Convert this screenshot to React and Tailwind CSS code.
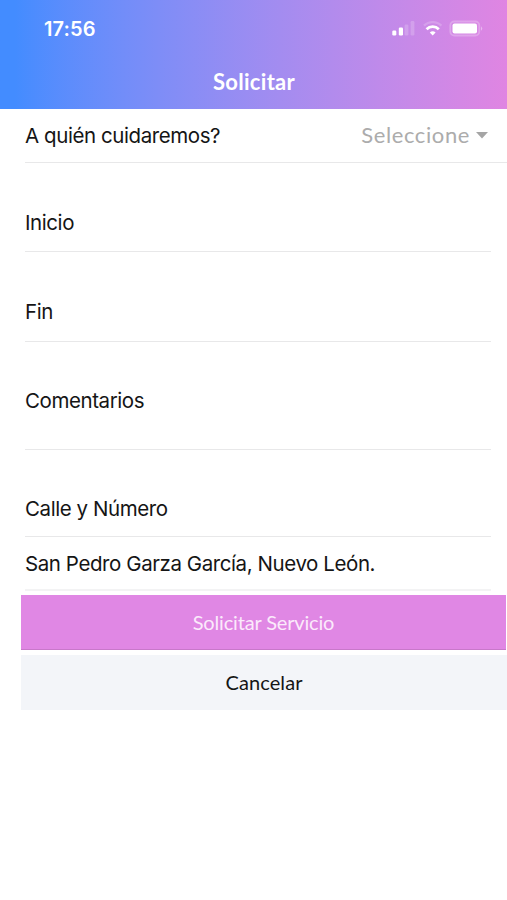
function StatusIcons() {
  return (
    <svg className="mr-[24px] h-[20px] w-[92px]" viewBox="0 0 92 20" fill="#fff">
      <rect x="1.3" y="11.5" width="4" height="5" rx="1.2" />
      <rect x="7.8" y="8.5" width="4.2" height="8" rx="1.2" />
      <rect x="13.6" y="5.5" width="3.8" height="11" rx="1.2" opacity="0.2" />
      <rect x="19.6" y="2" width="3.8" height="14.5" rx="1.2" opacity="0.2" />
      <path d="M33 6.6a12.6 12.6 0 0 1 17.4 0" fill="none" stroke="#fff" strokeWidth="2.4" opacity="0.2" />
      <path d="M35.6 10.2a8.5 8.5 0 0 1 12.2 0" fill="none" stroke="#fff" strokeWidth="2.8" />
      <path d="M38.8 13.5a4.4 4.4 0 0 1 5.8 0l-2.9 3z" />
      <rect x="59.3" y="2.5" width="29" height="14" rx="4" fill="none" stroke="#fff" strokeWidth="1.8" opacity="0.25" />
      <rect x="61.5" y="4.5" width="24.5" height="10" rx="2" />
      <path d="M90 7.2q2.4 2.3 0 4.6z" opacity="0.4" />
    </svg>
  );
}

function Field({ children, className }) {
  return (
    <div className={`ml-[25px] mr-[16px] flex text-[20.5px] leading-[24px] tracking-[-0.42px] ${className}`}>
      <span className="whitespace-nowrap">{children}</span>
    </div>
  );
}

export default function App() {
  return (
    <div className="h-[900px] w-full overflow-hidden bg-white font-['Inter',sans-serif] text-[#151515]">
      <header className="h-[109px] bg-linear-to-r from-[#438cff] from-3% to-[#e085e2] text-white">
        <div className="flex h-[58px] items-center justify-between">
          <span className="ml-[44px] text-[20px] font-semibold tracking-[0.1px]">17:56</span>
          <StatusIcons />
        </div>
        <h1 className="pl-[1px] text-center font-['Lato',sans-serif] text-[22px] leading-[48px] font-bold tracking-[0.3px]">Solicitar</h1>
      </header>
      <main>
        <div className="ml-[25px] flex h-[54px] items-center justify-between border-b border-[#e8e8e9] text-[20.5px]">
          <span className="pt-[2px] tracking-[-0.42px] whitespace-nowrap">A quién cuidaremos?</span>
          <div className="mr-[19px] flex items-center gap-[6px] text-[#acacac]">
            <span className="pb-[2px] font-['Lato',sans-serif] text-[22px] tracking-[0.6px]">Seleccione</span>
            <svg className="h-[7px] w-[12px]" viewBox="0 0 12 7" fill="#a5a5a5"><path d="M0 0h12L6 6.5z" /></svg>
          </div>
        </div>
        <Field className="h-[89px] border-b border-[#e8e8e9] pt-[48px]">Inicio</Field>
        <Field className="h-[90px] border-b border-[#e8e8e9] pt-[48px]">Fin</Field>
        <Field className="h-[108px] border-b border-[#e8e8e9] pt-[47px]">Comentarios</Field>
        <Field className="h-[87px] border-b border-[#e8e8e9] pt-[47px]">Calle y Número</Field>
        <Field className="h-[54px] border-b-2 border-[#f3f3f4] pt-[15px]">San Pedro Garza García, Nuevo León.</Field>
        <div className="mt-[4px] ml-[21px] flex flex-col gap-[5px] font-['Lato',sans-serif] text-[20px]">
          <button className="mr-[1px] h-[55px] border-b border-[#c878ca] bg-[#e087e4] tracking-[-0.17px] text-[#fbeafb]">Solicitar Servicio</button>
          <button className="h-[55px] bg-[#f3f5f9] pb-[2px] tracking-[0.1px]">Cancelar</button>
        </div>
      </main>
    </div>
  );
}
